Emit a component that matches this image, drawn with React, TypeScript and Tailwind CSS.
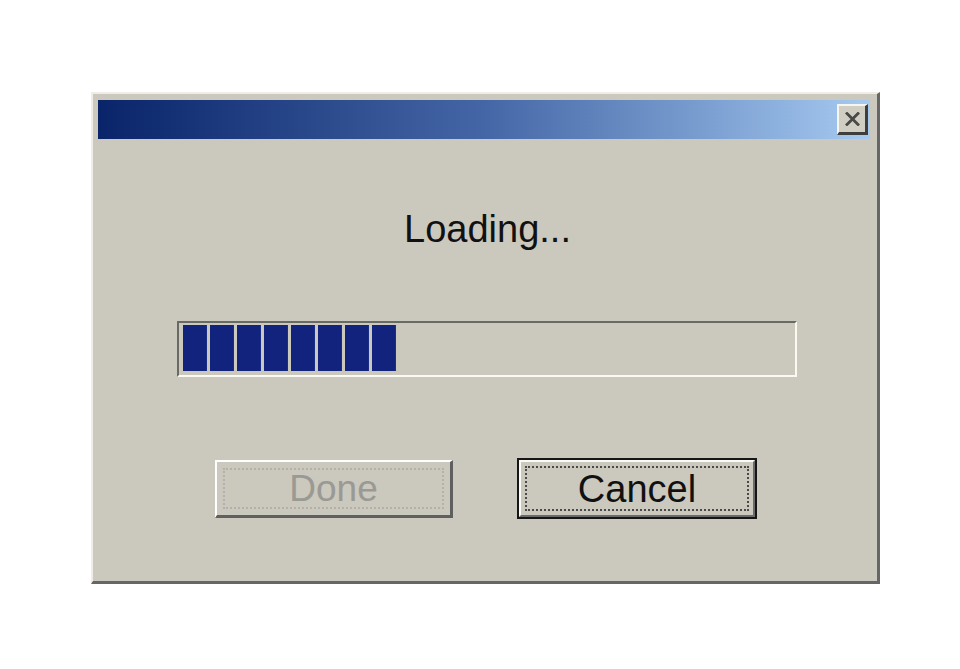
import React from 'react';

const BLOCKS = 8;

const CloseButton: React.FC = () => (
  <button className="w-[31px] h-[31px] mt-[4px] bg-[#d0cdc3] border-t-2 border-l-2 border-r-[3px] border-b-[3px] border-t-[#f6f5f0] border-l-[#f6f5f0] border-r-[#3e3e3e] border-b-[#3e3e3e] flex items-center justify-center">
    <svg width="15" height="14" viewBox="0 0 15 14">
      <path d="M2 1.5 L13 12.5 M13 1.5 L2 12.5" stroke="#484848" strokeWidth="2.8" strokeLinecap="square" />
    </svg>
  </button>
);

const ProgressBar: React.FC<{ filled: number }> = ({ filled }) => (
  <div className="ml-[79px] w-[620px] h-[56px] border-2 border-t-[#6a6a64] border-l-[#6a6a64] border-r-[#fbf9f1] border-b-[#fbf9f1] pt-[2px] pl-[4px] flex gap-[3px] items-start">
    {Array.from({ length: filled }).map((_, i) => (
      <div key={i} className="w-[24px] h-[46px] bg-[#11237c] border-r border-[#1b2e86]" />
    ))}
  </div>
);

export default function App() {
  return (
    <div className="min-h-screen bg-white pt-[92px] pl-[91px]" style={{ fontFamily: '"Liberation Sans", Arial, sans-serif' }}>
      <div className="w-[789px] h-[492px] bg-[#cbc8bd] border-t-2 border-l-2 border-r-[3px] border-b-[3px] border-t-[#efede6] border-l-[#efede6] border-r-[#666666] border-b-[#666666] pt-[6px] pl-[5px] pr-[7px] flex flex-col">
        {/* title bar */}
        <div className="h-[39px] bg-linear-to-r from-[#0a246a] via-[#4566a6] to-[#a6caf0] flex items-start justify-end pr-[2px]">
          <CloseButton />
        </div>

        <div className="mt-[68px] pl-[7px] text-center text-[38px] leading-[44px] text-[#111]">Loading...</div>

        <div className="mt-[70px]">
          <ProgressBar filled={BLOCKS} />
        </div>

        <div className="mt-[81px] h-[61px] ml-[117px] flex items-center gap-[64px]">
          <button className="w-[238px] h-[58px] border-t-2 border-l-2 border-r-[3px] border-b-[3px] border-t-white border-l-white border-r-[#5f5f5f] border-b-[#5f5f5f] p-[6px] flex">
            <span className="flex-1 border-2 border-dotted border-[#b7afab] flex items-center justify-center text-[37px] leading-none text-[#9a9994]">
              Done
            </span>
          </button>
          <button className="w-[240px] h-[61px] border-2 border-[#161616] flex">
            <span className="flex-1 border-2 border-t-[#fbfaf5] border-l-[#fbfaf5] border-r-[#6b6b6b] border-b-[#6b6b6b] p-[4px] flex">
              <span className="flex-1 border-2 border-dotted border-[#4a4a4a] flex items-center justify-center text-[38px] leading-none text-[#111]">
                Cancel
              </span>
            </span>
          </button>
        </div>
      </div>
    </div>
  );
}
